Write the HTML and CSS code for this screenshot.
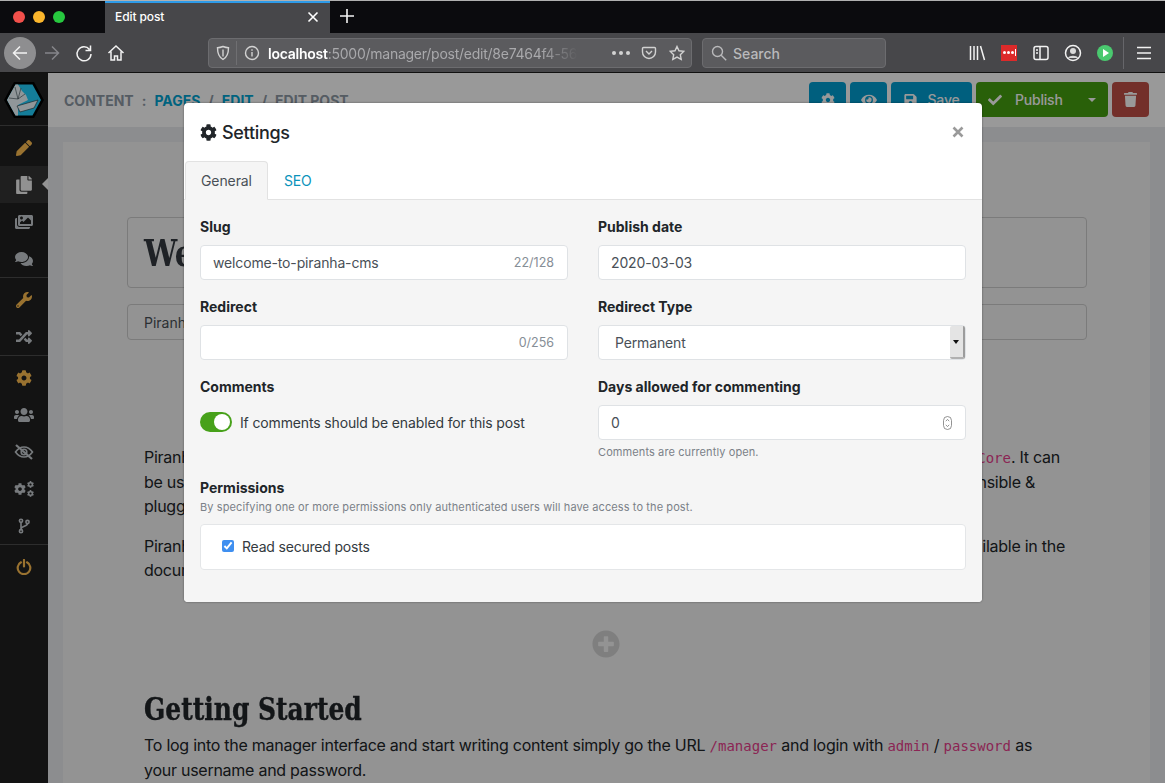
FILE: index.html
```html
<!DOCTYPE html>
<html lang="en">
<head>
    <meta charset="UTF-8">
    <meta name="viewport" content="width=device-width, initial-scale=1.0">
    <title>Edit post</title>
    <link rel="stylesheet" href="styles.css">
</head>
<body>

    <!-- shared icons -->
    <svg class="sprite" xmlns="http://www.w3.org/2000/svg">
        <symbol id="i-cog" viewBox="0 0 512 512"><path d="M487.4 315.7l-42.6-24.6c4.3-23.2 4.3-47 0-70.2l42.6-24.6c4.9-2.8 7.1-8.6 5.5-14-11.1-35.6-30-67.8-54.7-94.6-3.8-4.1-10-5.1-14.8-2.3L380.8 110c-17.9-15.4-38.5-27.3-60.8-35.1V25.8c0-5.6-3.9-10.5-9.4-11.7-36.7-8.2-74.3-7.8-109.2 0-5.5 1.2-9.4 6.1-9.4 11.7V75c-22.2 7.9-42.8 19.8-60.8 35.1L88.7 85.5c-4.9-2.8-11-1.9-14.8 2.3-24.7 26.7-43.6 58.9-54.7 94.6-1.7 5.4.6 11.2 5.5 14L67.3 221c-4.3 23.2-4.3 47 0 70.2l-42.6 24.6c-4.9 2.8-7.1 8.6-5.5 14 11.1 35.6 30 67.8 54.7 94.6 3.8 4.1 10 5.1 14.8 2.3l42.6-24.6c17.9 15.4 38.5 27.3 60.8 35.1v49.2c0 5.6 3.9 10.5 9.4 11.7 36.7 8.2 74.3 7.8 109.2 0 5.5-1.2 9.4-6.1 9.4-11.7v-49.2c22.2-7.9 42.8-19.8 60.8-35.1l42.6 24.6c4.9 2.8 11 1.9 14.8-2.3 24.7-26.7 43.6-58.9 54.7-94.6 1.5-5.5-.7-11.3-5.6-14.1zM256 336c-44.1 0-80-35.9-80-80s35.9-80 80-80 80 35.9 80 80-35.9 80-80 80z"/></symbol>
        <symbol id="i-pencil" viewBox="0 0 512 512"><path d="M497.9 142.1l-46.1 46.1c-4.7 4.7-12.3 4.7-17 0l-111-111c-4.7-4.7-4.7-12.3 0-17l46.1-46.1c18.7-18.7 49.1-18.7 67.9 0l60.1 60.1c18.8 18.7 18.8 49.1 0 67.9zM284.2 99.8L21.6 362.4.4 483.9c-2.9 16.4 11.4 30.6 27.8 27.8l121.5-21.3 262.6-262.6c4.7-4.7 4.7-12.3 0-17l-111-111c-4.8-4.7-12.4-4.7-17.1 0z"/></symbol>
        <symbol id="i-copy" viewBox="0 0 448 512"><path d="M320 448v40c0 13.255-10.745 24-24 24H24c-13.255 0-24-10.745-24-24V120c0-13.255 10.745-24 24-24h72v296c0 30.879 25.121 56 56 56h168zm0-344V0H152c-13.255 0-24 10.745-24 24v368c0 13.255 10.745 24 24 24h272c13.255 0 24-10.745 24-24V128H344c-13.2 0-24-10.8-24-24zm120.971-31.029L375.029 7.029A24 24 0 0 0 358.059 0H352v96h96v-6.059a24 24 0 0 0-7.029-16.97z"/></symbol>
        <symbol id="i-images" viewBox="0 0 576 512"><path d="M480 416v16c0 26.51-21.49 48-48 48H48c-26.51 0-48-21.49-48-48V176c0-26.51 21.49-48 48-48h16v208c0 44.112 35.888 80 80 80h336zm96-80V80c0-26.51-21.49-48-48-48H144c-26.51 0-48 21.49-48 48v256c0 26.51 21.49 48 48 48h384c26.51 0 48-21.49 48-48zM256 128c0 26.51-21.49 48-48 48s-48-21.49-48-48 21.49-48 48-48 48 21.49 48 48zm-96 144l55.515-55.515c4.686-4.686 12.284-4.686 16.971 0L272 256l135.515-135.515c4.686-4.686 12.284-4.686 16.971 0L512 208v112H160v-48z"/></symbol>
        <symbol id="i-comments" viewBox="0 0 576 512"><path d="M416 192c0-88.4-93.1-160-208-160S0 103.6 0 192c0 34.3 14.1 65.9 38 92-13.4 30.2-35.5 54.2-35.8 54.5-2.2 2.3-2.8 5.7-1.5 8.7S4.8 352 8 352c36.6 0 66.9-12.3 88.7-25 32.2 15.7 70.3 25 111.3 25 114.9 0 208-71.6 208-160zm122 220c23.9-26 38-57.7 38-92 0-66.9-53.5-124.2-129.3-148.1.9 6.6 1.3 13.3 1.3 20.1 0 105.9-107.7 192-240 192-10.8 0-21.3-.8-31.7-1.9C207.8 439.6 281.8 480 368 480c41 0 79.1-9.2 111.3-25 21.8 12.7 52.1 25 88.7 25 3.2 0 6.1-1.9 7.3-4.8 1.3-2.9.7-6.3-1.5-8.7-.3-.3-22.4-24.2-35.8-54.5z"/></symbol>
        <symbol id="i-wrench" viewBox="0 0 512 512"><path d="M507.73 109.1c-2.24-9.03-13.54-12.09-20.12-5.51l-74.36 74.36-67.88-11.31-11.31-67.88 74.36-74.36c6.62-6.62 3.43-17.9-5.66-20.16-47.38-11.74-99.55.91-136.58 37.93-39.64 39.64-50.55 97.1-34.05 147.2L18.74 402.76c-24.99 24.99-24.99 65.51 0 90.5 24.99 24.99 65.51 24.99 90.5 0l213.21-213.21c50.12 16.71 107.47 5.68 147.37-34.22 37.07-37.07 49.7-89.32 37.91-136.73zM64 472c-13.25 0-24-10.75-24-24 0-13.26 10.75-24 24-24s24 10.74 24 24c0 13.25-10.75 24-24 24z"/></symbol>
        <symbol id="i-random" viewBox="0 0 512 512"><path d="M504.971 359.029c9.373 9.373 9.373 24.569 0 33.941l-80 79.984c-15.01 15.01-40.971 4.49-40.971-16.971V416h-58.785a12.004 12.004 0 0 1-8.773-3.812l-70.556-75.596 53.333-57.143L352 336h32v-39.981c0-21.438 25.943-31.998 40.971-16.971l80 79.981zM12 176h84l52.781 56.551 53.333-57.143-70.556-75.596A11.999 11.999 0 0 0 122.785 96H12c-6.627 0-12 5.373-12 12v56c0 6.627 5.373 12 12 12zm372 0v39.984c0 21.46 25.961 31.98 40.971 16.971l80-79.984c9.373-9.373 9.373-24.569 0-33.941l-80-79.981C409.943 24.021 384 34.582 384 56.019V96h-58.785a12.004 12.004 0 0 0-8.773 3.812L96 336H12c-6.627 0-12 5.373-12 12v56c0 6.627 5.373 12 12 12h110.785c3.326 0 6.503-1.381 8.773-3.812L352 176h32z"/></symbol>
        <symbol id="i-users" viewBox="0 0 640 512"><path d="M96 224c35.3 0 64-28.7 64-64s-28.7-64-64-64-64 28.7-64 64 28.7 64 64 64zm448 0c35.3 0 64-28.7 64-64s-28.7-64-64-64-64 28.7-64 64 28.7 64 64 64zm32 32h-64c-17.6 0-33.5 7.1-45.1 18.6 40.3 22.1 68.9 62 75.1 109.4h66c17.7 0 32-14.3 32-32v-32c0-35.3-28.7-64-64-64zm-256 0c61.9 0 112-50.1 112-112S381.9 32 320 32 208 82.1 208 144s50.1 112 112 112zm76.8 32h-8.3c-20.8 10-43.9 16-68.5 16s-47.6-6-68.5-16h-8.3C179.6 288 128 339.6 128 403.2V432c0 26.5 21.5 48 48 48h288c26.5 0 48-21.5 48-48v-28.8c0-63.6-51.6-115.2-115.2-115.2zm-223.7-13.4C161.5 263.1 145.6 256 128 256H64c-35.3 0-64 28.7-64 64v32c0 17.7 14.3 32 32 32h65.9c6.3-47.4 34.9-87.3 75.2-109.4z"/></symbol>
        <symbol id="i-eye" viewBox="0 0 576 512"><path d="M572.52 241.4C518.29 135.59 410.93 64 288 64S57.68 135.64 3.48 241.41a32.35 32.35 0 0 0 0 29.19C57.71 376.41 165.07 448 288 448s230.32-71.64 284.52-177.41a32.35 32.35 0 0 0 0-29.19zM288 400a144 144 0 1 1 144-144 143.93 143.93 0 0 1-144 144zm0-240a95.31 95.31 0 0 0-25.31 3.79 47.85 47.85 0 0 1-66.9 66.9A95.78 95.78 0 1 0 288 160z"/></symbol>
        <symbol id="i-save" viewBox="0 0 448 512"><path d="M433.941 129.941l-83.882-83.882A48 48 0 0 0 316.118 32H48C21.49 32 0 53.49 0 80v352c0 26.51 21.49 48 48 48h352c26.51 0 48-21.49 48-48V163.882a48 48 0 0 0-14.059-33.941zM224 416c-35.346 0-64-28.654-64-64 0-35.346 28.654-64 64-64s64 28.654 64 64c0 35.346-28.654 64-64 64zm96-304.52V212c0 6.627-5.373 12-12 12H76c-6.627 0-12-5.373-12-12V108c0-6.627 5.373-12 12-12h228.52c3.183 0 6.235 1.264 8.485 3.515l3.48 3.48A11.996 11.996 0 0 1 320 111.48z"/></symbol>
        <symbol id="i-check" viewBox="0 0 512 512"><path d="M173.898 439.404l-166.4-166.4c-9.997-9.997-9.997-26.206 0-36.204l36.203-36.204c9.997-9.998 26.207-9.998 36.204 0L192 312.69 432.095 72.596c9.997-9.997 26.207-9.997 36.204 0l36.203 36.204c9.997 9.997 9.997 26.206 0 36.204l-294.4 294.401c-9.998 9.997-26.207 9.997-36.204-.001z"/></symbol>
        <symbol id="i-trash" viewBox="0 0 448 512"><path d="M432 32H312l-9.4-18.7A24 24 0 0 0 281.1 0H166.8a23.72 23.72 0 0 0-21.4 13.3L136 32H16A16 16 0 0 0 0 48v32a16 16 0 0 0 16 16h416a16 16 0 0 0 16-16V48a16 16 0 0 0-16-16zM53.2 467a48 48 0 0 0 47.9 45h245.8a48 48 0 0 0 47.9-45L416 128H32z"/></symbol>
        <symbol id="i-plus" viewBox="0 0 512 512"><path d="M256 8C119 8 8 119 8 256s111 248 248 248 248-111 248-248S393 8 256 8zm144 276c0 6.6-5.4 12-12 12h-92v92c0 6.6-5.4 12-12 12h-56c-6.6 0-12-5.4-12-12v-92h-92c-6.6 0-12-5.4-12-12v-56c0-6.6 5.4-12 12-12h92v-92c0-6.6 5.4-12 12-12h56c6.6 0 12 5.4 12 12v92h92c6.6 0 12 5.4 12 12v56z"/></symbol>
    </svg>

    <!-- browser frame -->
    <div class="tabbar">
        <div class="lights">
            <span class="light red"></span>
            <span class="light yellow"></span>
            <span class="light green"></span>
        </div>
        <div class="tab">
            <span class="tab-title">Edit post</span>
            <svg class="tab-close" viewBox="0 0 12 12"><path d="M1.5 1.5l9 9M10.5 1.5l-9 9"/></svg>
        </div>
        <svg class="tab-new" viewBox="0 0 16 16"><path d="M8 1v14M1 8h14"/></svg>
    </div>

    <div class="toolbar">
        <span class="nav-btn back">
            <svg viewBox="0 0 20 20"><path d="M17 10H4M10 3.5L3.5 10l6.5 6.5"/></svg>
        </span>
        <span class="nav-btn off">
            <svg viewBox="0 0 20 20"><path d="M3 10h13M10 3.5l6.5 6.5-6.5 6.5"/></svg>
        </span>
        <span class="nav-btn">
            <svg viewBox="0 0 20 20"><path d="M15.5 6.5A7 7 0 1 0 17 11M16.5 2.5v5h-5"/></svg>
        </span>
        <span class="nav-btn">
            <svg viewBox="0 0 20 20"><path d="M2.5 10L10 3l7.500 7M5 8.500V17h3.500v-4h3v4H15V8.500"/></svg>
        </span>

        <div class="urlbar">
            <svg class="url-ico" viewBox="0 0 16 16"><path d="M8 1.500c2 .8 3.800 1.200 5.500 1.200 0 5.500-1.500 9.500-5.500 11.800C4 12.200 2.500 8.200 2.500 2.700 4.200 2.700 6 2.300 8 1.500zM8 4.500v7"/></svg>
            <span class="url-sep"></span>
            <svg class="url-ico" viewBox="0 0 16 16"><circle cx="8" cy="8" r="6.500"/><path d="M8 7v4.500M8 4.300v1.400"/></svg>
            <span class="url-text"><b>localhost</b>:5000/manager/post/edit/8e7464f4-5642-4a8c</span>
            <span class="url-dots"><i></i><i></i><i></i></span>
            <svg class="url-ico" viewBox="0 0 16 16"><path d="M2.500 2.500h11a1 1 0 0 1 1 1V7a6.500 6.500 0 0 1-13 0V3.500a1 1 0 0 1 1-1zM5 6l3 3 3-3"/></svg>
            <svg class="url-ico" viewBox="0 0 16 16"><path d="M8 1.500l2 4.300 4.700.6-3.400 3.300.9 4.700L8 12.100l-4.200 2.300.9-4.700L1.300 6.400 6 5.800z"/></svg>
        </div>

        <div class="searchbar">
            <svg class="url-ico" viewBox="0 0 16 16"><circle cx="6.500" cy="6.500" r="5"/><path d="M10.200 10.200l5 5"/></svg>
            <span>Search</span>
        </div>

        <div class="extras">
            <span class="nav-btn"><svg viewBox="0 0 20 20"><path d="M3.500 3v14M7 3v14M10.500 3v14M13.500 3l4 14"/></svg></span>
            <span class="nav-btn"><span class="lastpass"><i></i><i></i><i></i><em></em></span></span>
            <span class="nav-btn"><svg viewBox="0 0 20 20"><rect x="3" y="3.500" width="14" height="13" rx="2"/><path d="M9 3.500v13M5 7h2M5 10h2"/></svg></span>
            <span class="nav-btn"><svg viewBox="0 0 20 20"><circle cx="10" cy="10" r="7.500"/><circle cx="10" cy="8" r="3" class="solid"/><path d="M5 15c1-3 9-3 10 0" class="solid"/></svg></span>
            <span class="nav-btn"><span class="play"></span></span>
        </div>
        <span class="tool-sep"></span>
        <span class="nav-btn menu"><svg viewBox="0 0 20 20"><path d="M3 4.500h14M3 10h14M3 15.500h14"/></svg></span>
    </div>

    <!-- manager app -->
    <div class="app">
        <aside class="sidebar">
            <div class="logo">
                <svg viewBox="0 0 42 38" width="42" height="38">
                    <polygon points="11,1 31,1 41,19 31,37 11,37 1,19" fill="#000"/>
                    <polygon points="12.500,3.500 29.500,3.500 38,19 29.500,34.500 12.500,34.500 4,19" fill="#22d0ff"/>
                    <polygon points="12.500,3.500 15,3.500 19,10 23,14 25,19 15,24 15,34.500 12.500,34.500 4,19" fill="#f0fbff"/>
                    <path d="M12 6l3 12 7-5M6 17l9 1M18 7l-3 11" fill="none" stroke="#33434b" stroke-width=".6"/>
                    <polygon points="14,25 35,19 31,27 17,31" fill="#f0fbff" stroke="#1c2a30" stroke-width=".6"/>
                </svg>
            </div>
            <nav class="side-group">
                <a class="side-item gold"><svg width="16" height="16"><use href="#i-pencil"/></svg></a>
                <a class="side-item active"><svg width="16" height="18"><use href="#i-copy"/></svg></a>
                <a class="side-item"><svg width="18" height="16"><use href="#i-images"/></svg></a>
                <a class="side-item"><svg width="18" height="16"><use href="#i-comments"/></svg></a>
            </nav>
            <nav class="side-group">
                <a class="side-item gold"><svg width="16" height="16"><use href="#i-wrench"/></svg></a>
                <a class="side-item"><svg width="16" height="16"><use href="#i-random"/></svg></a>
            </nav>
            <nav class="side-group">
                <a class="side-item gold"><svg width="16" height="16"><use href="#i-cog"/></svg></a>
                <a class="side-item"><svg width="20" height="16"><use href="#i-users"/></svg></a>
                <a class="side-item">
                    <svg class="line-ico" viewBox="0 0 20 16" width="20" height="16"><path d="M1.500 8C4 4.500 7 3 10 3s6 1.500 8.500 5c-2.500 3.500-5.500 5-8.500 5S4 11.500 1.500 8z"/><circle cx="10" cy="8" r="2.800"/><path d="M2 1l16 14" class="slash"/></svg>
                </a>
                <a class="side-item">
                    <svg width="20" height="16" viewBox="0 0 20 16">
                        <use href="#i-cog" x="0" y="2" width="12" height="12"/>
                        <use href="#i-cog" x="13" y="0" width="7" height="7"/>
                        <use href="#i-cog" x="13" y="9" width="7" height="7"/>
                    </svg>
                </a>
                <a class="side-item">
                    <svg class="line-ico" viewBox="0 0 12 16" width="12" height="16"><circle cx="3" cy="2.800" r="1.600"/><circle cx="3" cy="13.200" r="1.600"/><circle cx="9.500" cy="4" r="1.600"/><path d="M3 4.400v7.200M9.500 5.600c0 3-6.500 2.500-6.500 5.600"/></svg>
                </a>
            </nav>
            <nav class="side-group last">
                <a class="side-item gold">
                    <svg class="line-ico thick" viewBox="0 0 16 16" width="16" height="16"><path d="M5 3.300a6.300 6.300 0 1 0 6 0M8 1v6.500"/></svg>
                </a>
            </nav>
        </aside>

        <main class="page">
            <header class="page-head">
                <div class="crumbs">
                    <span>CONTENT</span><span class="colon">:</span>
                    <a>PAGES</a><span class="slash-sep">/</span>
                    <a>EDIT</a><span class="slash-sep">/</span>
                    <span>EDIT POST</span>
                </div>
                <div class="actions">
                    <button class="btn teal"><svg width="14" height="14"><use href="#i-cog"/></svg></button>
                    <button class="btn teal"><svg width="16" height="14"><use href="#i-eye"/></svg></button>
                    <button class="btn teal save"><svg width="13" height="14"><use href="#i-save"/></svg>Save</button>
                    <button class="btn lime publish">
                        <svg width="14" height="14"><use href="#i-check"/></svg>
                        <span class="publish-label">Publish</span>
                        <span class="caret"></span>
                    </button>
                    <button class="btn red"><svg width="13" height="15"><use href="#i-trash"/></svg></button>
                </div>
            </header>

            <article class="post">
                <div class="title-box"><h1>Welcome to Piranha CMS</h1></div>
                <div class="excerpt-box">Piranha CMS</div>

                <div class="copy">
                    <div class="line end-a"><span>Piranha is</span><span><code>.NET Core</code>. It can</span></div>
                    <div class="line end-b"><span>be used</span><span>extensible &amp;</span></div>
                    <div class="line"><span>pluggable</span></div>
                    <div class="line gap end-c"><span>Piranha is</span><span>available in the</span></div>
                    <div class="line"><span>documentation</span></div>
                </div>

                <div class="add-block"><svg width="28" height="28"><use href="#i-plus"/></svg></div>

                <h2>Getting Started</h2>
                <p class="intro">To log into the manager interface and start writing content simply go the URL <code>/manager</code> and login with <code>admin</code> / <code>password</code> as your username and password.</p>
            </article>
        </main>

        <div class="backdrop"></div>

        <section class="modal">
            <div class="modal-head">
                <h5><svg width="17" height="17"><use href="#i-cog"/></svg>Settings</h5>
                <svg class="modal-close" viewBox="0 0 12 12"><path d="M1.500 1.500l9 9M10.500 1.500l-9 9"/></svg>
            </div>
            <div class="modal-tabs">
                <a class="modal-tab current">General</a>
                <a class="modal-tab">SEO</a>
            </div>
            <div class="modal-body">
                <div class="form-grid">
                    <div class="field">
                        <label>Slug</label>
                        <div class="input-wrap">
                            <input class="input" type="text" value="welcome-to-piranha-cms" readonly>
                            <span class="count">22/128</span>
                        </div>
                    </div>
                    <div class="field">
                        <label>Publish date</label>
                        <div class="input-wrap">
                            <input class="input" type="text" value="2020-03-03" readonly>
                        </div>
                    </div>
                    <div class="field">
                        <label>Redirect</label>
                        <div class="input-wrap">
                            <input class="input" type="text" readonly>
                            <span class="count">0/256</span>
                        </div>
                    </div>
                    <div class="field">
                        <label>Redirect Type</label>
                        <div class="select">
                            <span>Permanent</span>
                            <span class="select-btn"></span>
                        </div>
                    </div>
                    <div class="field">
                        <label>Comments</label>
                        <div class="switch-row">
                            <span class="switch"></span>
                            <span>If comments should be enabled for this post</span>
                        </div>
                    </div>
                    <div class="field">
                        <label>Days allowed for commenting</label>
                        <div class="input-wrap">
                            <input class="input" type="text" value="0" readonly>
                            <svg class="stepper" viewBox="0 0 9 14"><rect x=".5" y=".5" width="8" height="13" rx="4"/><path d="M2.800 5.200L4.500 3.400l1.700 1.800M2.800 8.800l1.700 1.800 1.700-1.800"/></svg>
                        </div>
                        <small>Comments are currently open.</small>
                    </div>
                </div>

                <label>Permissions</label>
                <small class="perm-help">By specifying one or more permissions only authenticated users will have access to the post.</small>
                <div class="perm-box">
                    <input type="checkbox" checked>
                    <span>Read secured posts</span>
                </div>
            </div>
        </section>
    </div>

</body>
</html>
```

FILE: styles.css
```css
* {
    box-sizing: border-box;
}

html, body {
    margin: 0;
    height: 100%;
    overflow: hidden;
}

body {
    font-family: Inter, "Noto Sans", sans-serif;
    font-size: 14px;
    color: #212529;
    background: #0b0b0e;
}

.sprite {
    display: none;
}

svg {
    fill: currentColor;
    display: block;
}

/* browser frame */
.tabbar {
    height: 33px;
    display: flex;
    align-items: stretch;
    background: #0b0b0e;
    border-top: 1px solid #b0b0b0;
    position: relative;
}

.lights {
    width: 105px;
    display: flex;
    align-items: center;
    gap: 8px;
    padding-left: 13px;
}

.light {
    width: 12px;
    height: 12px;
    border-radius: 50%;
}

.red { background: #f2504b; }
.yellow { background: #fbb62c; }
.green { background: #27c83f; }

.tab {
    width: 225px;
    display: flex;
    align-items: center;
    justify-content: space-between;
    padding: 0 11px 3px 10px;
    background: #47474a;
    border-top: 2px solid #2e9be8;
    color: #fff;
    font-size: 12px;
    font-weight: 500;
    letter-spacing: -.1px;
}

.tab-close {
    width: 12px;
    height: 12px;
    fill: none;
    stroke: #fff;
    stroke-width: 1.6;
}

.tab-new {
    width: 16px;
    height: 16px;
    margin: 7px 0 0 9px;
    fill: none;
    stroke: #f4f4f4;
    stroke-width: 1.6;
}

.toolbar {
    height: 39px;
    display: flex;
    align-items: center;
    padding-left: 4px;
    background: #47474a;
    color: #f2f2f2;
}

.nav-btn {
    width: 32px;
    height: 32px;
    flex: none;
    display: flex;
    align-items: center;
    justify-content: center;
    border-radius: 50%;
}

.nav-btn svg {
    width: 20px;
    height: 20px;
    fill: none;
    stroke: currentColor;
    stroke-width: 1.5;
}

.nav-btn .solid {
    fill: #d8d8d8;
    stroke: none;
}

.back {
    background: #8e8e90;
}

.off {
    color: #85858a;
}

.urlbar, .searchbar {
    height: 30px;
    display: flex;
    align-items: center;
    background: #5b5b5e;
    border: 1px solid #6c6c6f;
    border-radius: 4px;
    color: #d2d2d2;
}

.urlbar {
    width: 484px;
    margin-left: 76px;
    padding: 0 6px;
}

.url-ico {
    width: 16px;
    height: 16px;
    flex: none;
    fill: none;
    stroke: currentColor;
    stroke-width: 1.4;
}

.url-sep {
    width: 1px;
    height: 24px;
    margin: 0 7px 0 5px;
    background: #6f6f72;
}

.url-text {
    width: 310px;
    margin: 1px 0 0 8px;
    white-space: nowrap;
    overflow: hidden;
    color: #a9a9ac;
    font-size: 14px;
    letter-spacing: -.25px;
    -webkit-mask-image: linear-gradient(to right, #000 88%, transparent);
    mask-image: linear-gradient(to right, #000 88%, transparent);
}

.url-text b {
    color: #fff;
    font-weight: 600;
}

.url-dots {
    display: flex;
    gap: 3px;
    margin: 0 11px 0 34px;
}

.url-dots i {
    width: 4px;
    height: 4px;
    border-radius: 50%;
    background: #d2d2d2;
}

.urlbar .url-ico:last-child {
    margin-left: 12px;
}

.searchbar {
    width: 184px;
    margin-left: 10px;
    padding-left: 8px;
    gap: 6px;
    font-size: 14px;
    font-weight: 500;
    color: #b9b9bb;
}

.searchbar span {
    margin-top: 1px;
}

.extras {
    display: flex;
    margin-left: 75px;
}

.lastpass {
    width: 16px;
    height: 16px;
    display: flex;
    align-items: center;
    justify-content: center;
    gap: 1px;
    background: #dc2a2a;
}

.lastpass i {
    width: 3px;
    height: 3px;
    border-radius: 50%;
    background: #fff;
}

.lastpass em {
    width: 1px;
    height: 7px;
    background: #fff;
}

.play {
    width: 16px;
    height: 16px;
    border-radius: 50%;
    background: #4ac96f;
    position: relative;
}

.play::after {
    content: "";
    position: absolute;
    left: 6px;
    top: 4px;
    border-left: 6px solid #fff;
    border-top: 4px solid transparent;
    border-bottom: 4px solid transparent;
}

.tool-sep {
    width: 1px;
    height: 32px;
    margin-left: 2px;
    background: #66666a;
}

.menu {
    margin-left: 4px;
}

/* manager */
.app {
    height: 711px;
    position: relative;
    display: flex;
    overflow: hidden;
    background: #fff;
}

.sidebar {
    width: 48px;
    flex: none;
    background: #212121;
    color: #c6ccd1;
}

.logo {
    height: 54px;
    display: flex;
    align-items: center;
    justify-content: center;
    padding-top: 2px;
    border-bottom: 1px solid #4b4b4b;
}

.side-group {
    padding-top: 3px;
    border-bottom: 1px solid #4b4b4b;
}

.side-group.last {
    border-bottom: none;
}

.side-item {
    height: 37px;
    display: flex;
    align-items: center;
    justify-content: center;
    position: relative;
}

.side-item.gold {
    color: #ffbe50;
}

.side-item.active {
    background: #343434;
    color: #f2f2f2;
}

.side-item.active::after {
    content: "";
    position: absolute;
    right: 0;
    top: 12px;
    border-right: 6px solid #f5f5f5;
    border-top: 6px solid transparent;
    border-bottom: 6px solid transparent;
}

.line-ico {
    fill: none;
    stroke: currentColor;
    stroke-width: 1.6;
}

.line-ico .slash {
    stroke-width: 2.200;
}

.line-ico.thick {
    stroke-width: 2.200;
    stroke-linecap: round;
}

.page {
    flex: 1;
    min-width: 0;
    background: #e9ecef;
}

.page-head {
    height: 55px;
    display: flex;
    align-items: center;
    justify-content: space-between;
    padding: 0 16px;
    background: #fff;
}

.crumbs {
    display: flex;
    padding-top: 2px;
    font-size: 14px;
    font-weight: 700;
    color: #8e99a5;
}

.crumbs a {
    color: #00a5d4;
}

.colon {
    margin: 0 8px;
}

.slash-sep {
    margin: 0 8px;
}

.actions {
    display: flex;
    gap: 4px;
}

.btn {
    height: 35px;
    min-width: 37px;
    display: flex;
    align-items: center;
    justify-content: center;
    border: none;
    border-radius: 4px;
    padding: 0;
    color: #fff;
    font-family: inherit;
    font-size: 14px;
    font-weight: 500;
}

.teal { background: #009ed2; }
.lime { background: #45a00f; }
.btn.red { background: #c04f47; }

.save {
    width: 81px;
    gap: 11px;
    letter-spacing: -.2px;
}

.publish {
    width: 132px;
    justify-content: flex-start;
    padding: 0 12px;
    letter-spacing: -.2px;
}

.publish-label {
    margin-left: 13px;
}

.caret {
    margin-left: auto;
    border-top: 4px solid #fff;
    border-left: 4px solid transparent;
    border-right: 4px solid transparent;
}

.post {
    margin: 15px 15px 0;
    height: 700px;
    padding: 75px 63px 0 64px;
    background: #f5f5f5;
}

.title-box {
    height: 71px;
    padding: 0 16px;
    display: flex;
    align-items: center;
    border: 1px solid #cdcdcd;
    border-radius: 4px;
}

h1, h2 {
    margin: 0;
    font-family: "DejaVu Serif", serif;
    font-weight: 700;
    color: #343a40;
    transform-origin: left center;
    white-space: nowrap;
}

h1 {
    font-size: 37px;
    transform: scaleX(.8);
}

.excerpt-box {
    height: 36px;
    margin-top: 16px;
    padding: 0 16px;
    display: flex;
    align-items: center;
    border: 1px solid #cdcdcd;
    border-radius: 4px;
    font-size: 14px;
    color: #495057;
}

.copy {
    margin-top: 105px;
    padding-left: 17px;
    font-size: 16px;
    line-height: 24px;
    letter-spacing: -.26px;
}

.line {
    display: flex;
    justify-content: space-between;
    white-space: nowrap;
}

.line.gap {
    margin-top: 16px;
}

.end-a { padding-right: 27px; }
.end-b { padding-right: 52px; }
.end-c { padding-right: 22px; }

code {
    font-family: "DejaVu Sans Mono", "Liberation Mono", monospace;
    font-size: 14px;
    color: #e83e8c;
    letter-spacing: 0;
}

.add-block {
    display: flex;
    justify-content: center;
    padding: 48px 2px 32px 0;
    color: #d4d4d4;
}

.post h2 {
    font-size: 32px;
    line-height: 38px;
    margin-left: 17px;
    color: #212529;
    transform: scaleX(.78);
    -webkit-text-stroke: .4px #212529;
}

.intro {
    margin: 5px 0 0;
    padding: 0 0 0 17px;
    font-size: 16px;
    line-height: 24px;
    width: 930px;
    letter-spacing: -.26px;
}

.backdrop {
    position: absolute;
    inset: 0;
    background: rgba(0, 0, 0, .4);
    border-top: 1px solid #111;
}

/* settings dialog */
.modal {
    position: absolute;
    left: 184px;
    top: 31px;
    width: 798px;
    background: #fff;
    border-radius: 4px;
    box-shadow: 0 0 2px rgba(0, 0, 0, .5);
    overflow: hidden;
}

.modal-head {
    height: 58px;
    display: flex;
    align-items: center;
    justify-content: space-between;
    padding: 0 18px 0 16px;
}

.modal-head h5 {
    display: flex;
    align-items: center;
    gap: 5px;
    margin: 0;
    font-size: 18px;
    font-weight: 500;
    letter-spacing: -.3px;
    color: #212529;
}

.modal-close {
    width: 12px;
    height: 12px;
    fill: none;
    stroke: #9a9a9a;
    stroke-width: 2.600;
}

.modal-tabs {
    height: 39px;
    display: flex;
    padding-left: 1px;
    border-bottom: 1px solid #e2e2e2;
}

.modal-tab {
    height: 39px;
    display: flex;
    align-items: center;
    padding: 0 15px;
    border: 1px solid transparent;
    border-radius: 4px 4px 0 0;
    color: #0a93bb;
    letter-spacing: -.1px;
}

.modal-tab.current {
    background: #f5f5f5;
    border-color: #e2e2e2;
    border-bottom-color: #f5f5f5;
    color: #495057;
}

.modal-body {
    background: #f5f5f5;
    padding: 16px 16px 32px;
}

.modal-body label {
    display: block;
    height: 21px;
    line-height: 21px;
    font-weight: 700;
    color: #212529;
}

.form-grid {
    display: grid;
    grid-template-columns: 368px 368px;
    column-gap: 30px;
    row-gap: 16px;
    margin-bottom: 17px;
}

.field label {
    margin-bottom: 8px;
}

.input-wrap {
    height: 35px;
    display: flex;
    align-items: center;
    padding: 0 13px 0 12px;
    background: #fff;
    border: 1px solid #dfe2e5;
    border-radius: 4px;
}

.input {
    flex: 1;
    min-width: 0;
    height: 33px;
    padding: 0;
    background: transparent;
    border: none;
    font-family: inherit;
    font-size: 14px;
    letter-spacing: -.15px;
    color: #495057;
    outline: none;
}

.count {
    flex: none;
    font-size: 12.5px;
    color: #868e96;
}

.stepper {
    width: 9px;
    height: 14px;
    flex: none;
    fill: none;
    stroke: #777;
    stroke-width: .8;
}

.select {
    height: 35px;
    display: flex;
    align-items: center;
    justify-content: space-between;
    padding-left: 16px;
    background: #fff;
    border: 1px solid #dfe2e5;
    border-radius: 4px;
    color: #495057;
    letter-spacing: -.15px;
}

.select-btn {
    width: 15px;
    height: 33px;
    position: relative;
    background: #e4e4e4;
    border-right: 2px solid #9c9c9c;
    border-bottom: 2px solid #b0b0b0;
    border-radius: 2px;
}

.select-btn::after {
    content: "";
    position: absolute;
    left: 3px;
    top: 14px;
    border-top: 4px solid #111;
    border-left: 3.500px solid transparent;
    border-right: 3.500px solid transparent;
}

.switch-row {
    display: flex;
    align-items: center;
    gap: 8px;
    margin-top: 15px;
    height: 20px;
    color: #333a40;
    letter-spacing: -.14px;
}

.switch {
    width: 32px;
    height: 20px;
    position: relative;
    flex: none;
    border-radius: 10px;
    background: #47a11a;
}

.switch::after {
    content: "";
    position: absolute;
    right: 2px;
    top: 2px;
    width: 16px;
    height: 16px;
    border-radius: 50%;
    background: #fff;
}

.modal-body small {
    display: block;
    font-size: 11px;
    line-height: 16px;
    letter-spacing: .1px;
    color: #7b8188;
}

.field small {
    margin-top: 4px;
}

.perm-help {
    margin: 1px 0 9px;
}

.perm-box {
    height: 46px;
    display: flex;
    align-items: center;
    gap: 8px;
    padding: 0 0 2px 21px;
    background: #fff;
    border: 1px solid #e4e6e8;
    border-radius: 4px;
    color: #343a40;
    letter-spacing: -.2px;
}

.perm-box input {
    width: 12px;
    height: 12px;
    margin: 0;
    accent-color: #3f8ff0;
}
```
